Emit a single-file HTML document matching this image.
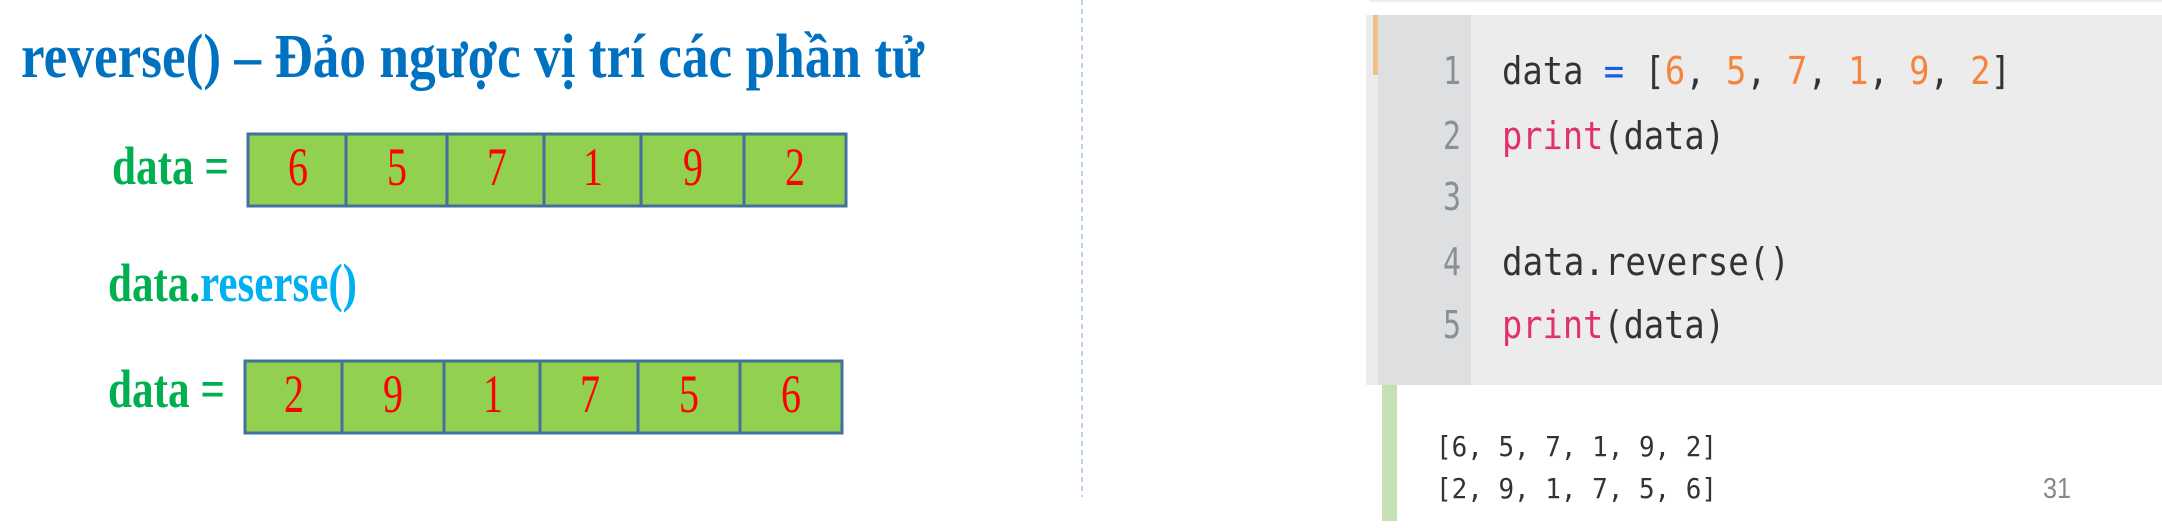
<!DOCTYPE html>
<html><head><meta charset="utf-8"><style>html,body{margin:0;padding:0;background:#fff;width:2162px;height:528px;overflow:hidden}</style></head>
<body>
<svg width="2162" height="528" viewBox="0 0 2162 528" xmlns="http://www.w3.org/2000/svg">
<rect width="2162" height="528" fill="#fff"/>
<text x="21" y="77" font-family="Liberation Serif, serif" font-weight="bold" font-size="62" fill="#0070c0" textLength="903" lengthAdjust="spacingAndGlyphs">reverse() – Đảo ngược vị trí các phần tử</text>

<g font-family="Liberation Serif, serif" font-weight="bold" font-size="54" fill="#00b050">
<text x="112" y="184" textLength="117" lengthAdjust="spacingAndGlyphs">data =</text>
<text x="108" y="301" textLength="249" lengthAdjust="spacingAndGlyphs">data.<tspan fill="#00b0f0">reserse()</tspan></text>
<text x="108" y="407" textLength="117" lengthAdjust="spacingAndGlyphs">data =</text>
</g>

<g stroke="#41719c" stroke-width="3" fill="#92d050">
<rect x="248" y="134" width="598" height="72"/>
<line x1="346" y1="134" x2="346" y2="206"/><line x1="447" y1="134" x2="447" y2="206"/><line x1="544" y1="134" x2="544" y2="206"/><line x1="641" y1="134" x2="641" y2="206"/><line x1="744" y1="134" x2="744" y2="206"/>
<rect x="245" y="361" width="597" height="72"/>
<line x1="342" y1="361" x2="342" y2="433"/><line x1="444" y1="361" x2="444" y2="433"/><line x1="540" y1="361" x2="540" y2="433"/><line x1="638" y1="361" x2="638" y2="433"/><line x1="740" y1="361" x2="740" y2="433"/>
</g>
<g font-family="Liberation Serif, serif" font-size="54" fill="#ff0000">
<text x="288" y="185" textLength="20" lengthAdjust="spacingAndGlyphs">6</text><text x="387" y="185" textLength="20" lengthAdjust="spacingAndGlyphs">5</text><text x="487" y="185" textLength="20" lengthAdjust="spacingAndGlyphs">7</text><text x="583" y="185" textLength="20" lengthAdjust="spacingAndGlyphs">1</text><text x="683" y="185" textLength="20" lengthAdjust="spacingAndGlyphs">9</text><text x="785" y="185" textLength="20" lengthAdjust="spacingAndGlyphs">2</text>
<text x="284" y="412" textLength="20" lengthAdjust="spacingAndGlyphs">2</text><text x="383" y="412" textLength="20" lengthAdjust="spacingAndGlyphs">9</text><text x="483" y="412" textLength="20" lengthAdjust="spacingAndGlyphs">1</text><text x="580" y="412" textLength="20" lengthAdjust="spacingAndGlyphs">7</text><text x="679" y="412" textLength="20" lengthAdjust="spacingAndGlyphs">5</text><text x="781" y="412" textLength="20" lengthAdjust="spacingAndGlyphs">6</text>
</g>
<line x1="1082" y1="0" x2="1082" y2="497" stroke="#9dc3e6" stroke-width="1.5" stroke-dasharray="5,4"/>

<rect x="1369" y="0" width="793" height="2" fill="#eeeeee"/>
<rect x="1366" y="15" width="796" height="370" fill="#ececec"/>
<rect x="1378" y="15" width="93" height="370" fill="#dedfe1"/>
<rect x="1373" y="15" width="5" height="60" fill="#f0c08a"/>
<g font-family="DejaVu Sans Mono, Liberation Mono, monospace" font-size="38" fill="#8a8f96">
<text x="1443" y="84" textLength="18" lengthAdjust="spacingAndGlyphs">1</text><text x="1443" y="149" textLength="18" lengthAdjust="spacingAndGlyphs">2</text><text x="1443" y="210" textLength="18" lengthAdjust="spacingAndGlyphs">3</text><text x="1443" y="275" textLength="18" lengthAdjust="spacingAndGlyphs">4</text><text x="1443" y="338" textLength="18" lengthAdjust="spacingAndGlyphs">5</text>
</g>
<g font-family="DejaVu Sans Mono, Liberation Mono, monospace" font-size="38" fill="#333">
<text x="1502" y="84" textLength="509" lengthAdjust="spacingAndGlyphs">data <tspan fill="#1a5fe0">=</tspan> [<tspan fill="#f5843c">6</tspan>, <tspan fill="#f5843c">5</tspan>, <tspan fill="#f5843c">7</tspan>, <tspan fill="#f5843c">1</tspan>, <tspan fill="#f5843c">9</tspan>, <tspan fill="#f5843c">2</tspan>]</text>
<text x="1502" y="149" textLength="223" lengthAdjust="spacingAndGlyphs"><tspan fill="#e0306e">print</tspan>(data)</text>
<text x="1502" y="275" textLength="288" lengthAdjust="spacingAndGlyphs">data.reverse()</text>
<text x="1502" y="338" textLength="223" lengthAdjust="spacingAndGlyphs"><tspan fill="#e0306e">print</tspan>(data)</text>
</g>
<rect x="1382" y="385" width="15" height="136" fill="#c6e0b4"/>
<g font-family="DejaVu Sans Mono, Liberation Mono, monospace" font-size="28" fill="#333">
<text x="1436" y="456" textLength="281" lengthAdjust="spacingAndGlyphs">[6, 5, 7, 1, 9, 2]</text>
<text x="1436" y="498" textLength="281" lengthAdjust="spacingAndGlyphs">[2, 9, 1, 7, 5, 6]</text>
</g>
<text x="2043" y="498" font-family="Liberation Sans, sans-serif" font-size="29" fill="#888" textLength="28" lengthAdjust="spacingAndGlyphs">31</text>
</svg>
</body></html>
